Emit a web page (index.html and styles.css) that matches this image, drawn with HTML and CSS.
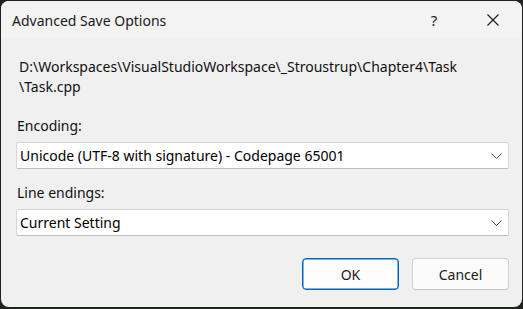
FILE: index.html
```html
<!DOCTYPE html>
<html>
<head>
<meta charset="utf-8">
<link rel="stylesheet" href="styles.css">
</head>
<body>
<div class="window">
  <div class="titlebar">
    <div class="title">Advanced Save Options</div>
    <div class="help">?</div>
    <div class="close">
      <svg width="12" height="12" viewBox="0 0 12 12"><path d="M0.5 0.5 L11.5 11.5 M11.5 0.5 L0.5 11.5" stroke="#1a1a1a" stroke-width="1.1" fill="none"/></svg>
    </div>
  </div>
  <div class="content">
    <div class="path">D:\Workspaces\VisualStudioWorkspace\_Stroustrup\Chapter4\Task<br>\Task.cpp</div>
    <div class="label">Encoding:</div>
    <div class="combo"><span>Unicode (UTF-8 with signature) - Codepage 65001</span>
      <svg class="chev" width="11" height="6" viewBox="0 0 11 6"><path d="M0.5 0.5 L5.5 5.5 L10.5 0.5" stroke="#444" stroke-width="1" fill="none"/></svg>
    </div>
    <div class="label">Line endings:</div>
    <div class="combo"><span>Current Setting</span>
      <svg class="chev" width="11" height="6" viewBox="0 0 11 6"><path d="M0.5 0.5 L5.5 5.5 L10.5 0.5" stroke="#444" stroke-width="1" fill="none"/></svg>
    </div>
    <div class="buttons">
      <div class="btn primary">OK</div>
      <div class="btn">Cancel</div>
    </div>
  </div>
</div>
</body>
</html>
```
FILE: styles.css
```css
html, body {
  margin: 0;
  padding: 0;
  background: #1f2320;
  width: 523px;
  height: 309px;
  overflow: hidden;
}
body {
  padding: 1px 1px 1px 1px;
  box-sizing: border-box;
  font-family: "Noto Sans", "Open Sans", sans-serif;
  font-size: 14px;
  color: #000;
}
.window {
  width: 521px;
  height: 306px;
  background: #f0f0f0;
  border-radius: 8px;
  overflow: hidden;
  display: flex;
  flex-direction: column;
}
.titlebar {
  height: 37px;
  background: #f3f3f3;
  display: flex;
  align-items: center;
  flex-shrink: 0;
}
.title {
  flex: 1;
  padding-left: 11px;
  font-size: 14px;
  color: #1a1a1a;
  padding-top: 1px;
}
.help {
  width: 20px;
  text-align: center;
  margin-right: 43px;
  font-size: 15px;
  color: #1a1a1a;
}
.close {
  width: 12px;
  height: 12px;
  margin-right: 23px;
  display: flex;
}
.content {
  padding: 0 13px 0 15px;
  display: flex;
  flex-direction: column;
}
.path {
  padding-left: 3px;
  margin-top: 19px;
  line-height: 20px;
  color: #111;
}
.label {
  line-height: 20px;
  color: #111;
  padding-left: 1px;
}
.path + .label {
  margin-top: 19px;
}
.combo {
  margin-top: 6px;
  height: 27px;
  box-sizing: border-box;
  background: #fff;
  border: 1px solid #d6d6d6;
  border-bottom-color: #bdbdbd;
  border-radius: 2px;
  display: flex;
  align-items: center;
  padding-left: 3px;
  padding-right: 6px;
}
.combo span {
  flex: 1;
  color: #000;
}
.combo + .label {
  margin-top: 14px;
}
.chev {
  display: block;
}
.buttons {
  margin-top: 22px;
  display: flex;
  justify-content: flex-end;
  gap: 13px;
}
.btn {
  width: 97px;
  height: 32px;
  box-sizing: border-box;
  border: 1px solid #d0d0d0;
  border-bottom-color: #c4c4c4;
  background: #fbfbfb;
  border-radius: 4px;
  display: flex;
  align-items: center;
  justify-content: center;
  color: #1a1a1a;
}
.btn.primary {
  border: 1px solid #0067c0;
  box-shadow: inset 0 0 0 0.5px #0067c0;
  background: #fdfdfd;
}
```
